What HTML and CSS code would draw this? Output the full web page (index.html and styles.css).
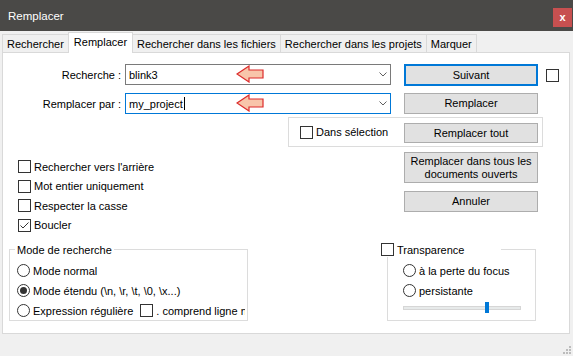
FILE: index.html
```html
<!DOCTYPE html>
<html lang="fr">
<head>
  <meta charset="UTF-8">
  <meta name="viewport" content="width=device-width, initial-scale=1.0">
  <title>Remplacer</title>
  <link rel="stylesheet" href="styles.css">
</head>
<body>
  <div class="window">
    <div class="titlebar">
      <span class="title">Remplacer</span>
      <span class="close">x</span>
    </div>

    <div class="tabs">
      <div class="tab">Rechercher</div>
      <div class="tab active">Remplacer</div>
      <div class="tab">Rechercher dans les fichiers</div>
      <div class="tab">Rechercher dans les projets</div>
      <div class="tab">Marquer</div>
    </div>

    <div class="panel">
      <!-- champs de recherche -->
      <div class="row">
        <div class="field">
          <span class="field-label">Recherche :</span>
          <div class="combo">
            <span class="combo-text">blink3</span>
            <svg class="pointer" width="28" height="18" viewBox="0 0 28 18"><polygon points="1,9 13,1 13,5 27,5 27,13 13,13 13,17" fill="#f8c5aa" stroke="#dc2b2b" stroke-width="1.2" stroke-linejoin="miter"/></svg>
            <svg class="chevron" width="8" height="5" viewBox="0 0 8 5"><polyline points="0.5,0.5 4,4 7.5,0.5" fill="none" stroke="#606060"/></svg>
          </div>
        </div>
        <div class="btn default">Suivant</div>
        <span class="box top-box"></span>
      </div>

      <div class="row">
        <div class="field">
          <span class="field-label">Remplacer par :</span>
          <div class="combo focus">
            <span class="combo-text">my_project</span><span class="caret"></span>
            <svg class="pointer" width="28" height="18" viewBox="0 0 28 18"><polygon points="1,9 13,1 13,5 27,5 27,13 13,13 13,17" fill="#f8c5aa" stroke="#dc2b2b" stroke-width="1.2" stroke-linejoin="miter"/></svg>
            <svg class="chevron" width="8" height="5" viewBox="0 0 8 5"><polyline points="0.5,0.5 4,4 7.5,0.5" fill="none" stroke="#606060"/></svg>
          </div>
        </div>
        <div class="btn">Remplacer</div>
      </div>

      <div class="selection">
        <label class="check"><span class="box"></span>Dans sélection</label>
        <div class="btn">Remplacer tout</div>
      </div>

      <!-- options -->
      <div class="options">
        <div class="checks">
          <label class="check"><span class="box"></span>Rechercher vers l'arrière</label>
          <label class="check"><span class="box"></span>Mot entier uniquement</label>
          <label class="check"><span class="box"></span>Respecter la casse</label>
          <label class="check"><span class="box"><svg width="11" height="11" viewBox="0 0 11 11"><polyline points="1.5,5.5 4,8 9.5,2.5" fill="none" stroke="#333"/></svg></span>Boucler</label>
        </div>
        <div class="actions">
          <div class="btn tall">Remplacer dans tous les<br>documents ouverts</div>
          <div class="btn">Annuler</div>
        </div>
      </div>

      <!-- modes -->
      <div class="modes">
        <fieldset class="mode">
          <legend>Mode de recherche</legend>
          <div class="radios">
            <label class="radio-row"><span class="radio"></span>Mode normal</label>
            <label class="radio-row"><span class="radio on"></span>Mode étendu (\n, \r, \t, \0, \x...)</label>
            <label class="radio-row"><span class="radio"></span>Expression régulière<span class="box dot-box"></span>. comprend ligne n</label>
          </div>
        </fieldset>

        <fieldset class="transp">
          <legend><span class="legend-check"><span class="box"></span>Transparence</span></legend>
          <div class="radios">
            <label class="radio-row"><span class="radio"></span>à la perte du focus</label>
            <label class="radio-row"><span class="radio"></span>persistante</label>
          </div>
          <div class="slider"><span class="thumb"></span></div>
        </fieldset>
      </div>
    </div>

    <div class="statusbar">
      <svg width="9" height="9" viewBox="0 0 9 9" fill="#bcbcbc">
        <rect x="7" y="1" width="2" height="2"/>
        <rect x="4" y="4" width="2" height="2"/>
        <rect x="7" y="4" width="2" height="2"/>
        <rect x="1" y="7" width="2" height="2"/>
        <rect x="4" y="7" width="2" height="2"/>
        <rect x="7" y="7" width="2" height="2"/>
      </svg>
    </div>
  </div>
</body>
</html>
```

FILE: styles.css
```css
* {
  box-sizing: border-box;
}

body {
  margin: 0;
  background: #f0f0f0;
  font-family: "Liberation Sans", Arial, sans-serif;
  font-size: 11px;
  color: #000;
  overflow: hidden;
}

.window {
  width: 573px;
  height: 356px;
  display: flex;
  flex-direction: column;
  background: #f0f0f0;
}

/* barre de titre */
.titlebar {
  flex: 0 0 31px;
  background: #4a4947;
  color: #fff;
  display: flex;
  align-items: flex-start;
  justify-content: space-between;
  padding: 0 1px 0 8px;
}

.title {
  margin-top: 9px;
  font-size: 11.5px;
  line-height: 14px;
}

.close {
  margin-top: 8px;
  width: 19px;
  height: 19px;
  background: #c75050;
  display: flex;
  align-items: center;
  justify-content: center;
  font-weight: bold;
  font-size: 11px;
  line-height: 1;
}

/* onglets */
.tabs {
  flex: 0 0 21px;
  display: flex;
  align-items: flex-end;
  padding-left: 2px;
  position: relative;
  z-index: 1;
}

.tab {
  height: 18px;
  padding: 0 4px;
  border: 1px solid #d9d9d9;
  border-bottom: none;
  margin-left: -1px;
  background: #f0f0f0;
  display: flex;
  align-items: center;
  white-space: nowrap;
}

.tab:first-child {
  margin-left: 0;
}

.tab.active {
  height: 21px;
  margin-bottom: -1px;
  padding: 0 5px 2px;
  background: #fff;
}

/* panneau principal */
.panel {
  flex: 0 0 282px;
  margin: 0 3px 0 2px;
  background: #fff;
  border: 1px solid #d9d9d9;
  padding-top: 11px;
}

.row {
  display: flex;
  align-items: flex-start;
}

.row + .row {
  margin-top: 7px;
}

.field {
  flex: 0 0 401px;
  display: flex;
  align-items: center;
}

.field-label {
  flex: 0 0 118px;
  margin-right: 4px;
  text-align: right;
}

.combo {
  width: 266px;
  height: 21px;
  border: 1px solid #7a7a7a;
  background: #fff;
  position: relative;
  display: flex;
  align-items: center;
  padding: 0 3px 0 3px;
}

.combo.focus {
  border-color: #0078d7;
}

.caret {
  width: 1px;
  height: 13px;
  margin-left: 1px;
  background: #000;
}

.chevron {
  margin-left: auto;
}

.pointer {
  position: absolute;
  left: 110px;
  top: 0;
}

.btn {
  width: 134px;
  height: 21px;
  flex: 0 0 auto;
  background: #e1e1e1;
  border: 1px solid #adadad;
  display: flex;
  align-items: center;
  justify-content: center;
  text-align: center;
  line-height: 13px;
}

.btn.default {
  height: 22px;
  border: 2px solid #0078d7;
}

.btn.tall {
  height: 31px;
}

.box {
  width: 13px;
  height: 13px;
  flex: 0 0 13px;
  border: 1px solid #333;
  background: #fff;
  display: inline-flex;
}

.top-box {
  margin: 5px 0 0 8px;
}

.check {
  display: flex;
  align-items: center;
  gap: 3px;
  white-space: nowrap;
}

.selection {
  margin: 3px 0 0 285px;
  width: 255px;
  height: 30px;
  border: 1px solid #dcdcdc;
  display: flex;
  align-items: center;
  padding: 0 4px 0 11px;
}

.selection .btn {
  margin-left: auto;
  height: 20px;
  margin-top: 2px;
}

.options {
  display: grid;
  grid-template-columns: 401px 134px;
  margin-top: 5px;
}

.checks {
  display: flex;
  flex-direction: column;
  gap: 6.5px;
  padding: 8px 0 0 15px;
}

.checks .check {
  height: 13px;
}

.actions {
  display: flex;
  flex-direction: column;
  gap: 8px;
}

/* groupes du bas */
.modes {
  display: flex;
  align-items: flex-start;
  margin-top: 11px;
}

fieldset {
  margin: 0;
  min-width: 0;
  border: 1px solid #dcdcdc;
}

legend {
  padding: 0 2px;
  line-height: 14px;
}

.mode {
  margin-left: 6px;
  width: 239px;
  padding: 5px 2px 0 7px;
}

.mode legend {
  margin-left: -2px;
}

.radios {
  display: flex;
  flex-direction: column;
  gap: 2px;
}

.radio-row {
  height: 18px;
  display: flex;
  align-items: center;
  gap: 3px;
  white-space: nowrap;
  overflow: hidden;
}

.radio {
  width: 13px;
  height: 13px;
  flex: 0 0 13px;
  border: 1px solid #333;
  border-radius: 50%;
  background: #fff;
  display: flex;
  align-items: center;
  justify-content: center;
}

.radio.on::after {
  content: "";
  width: 7px;
  height: 7px;
  border-radius: 50%;
  background: #333;
}

.dot-box {
  margin-left: 4px;
}

.transp {
  margin-left: 139px;
  width: 149px;
  padding: 5px 0 10px 15px;
}

.transp legend {
  margin-left: -22px;
  width: 120px;
  padding: 0;
}

.legend-check {
  display: flex;
  align-items: center;
  gap: 3px;
}

.slider {
  position: relative;
  width: 118px;
  height: 4px;
  margin-top: 6px;
  background: #e7eaea;
  border: 1px solid #d6d6d6;
}

.thumb {
  position: absolute;
  left: 81px;
  top: -5px;
  width: 4px;
  height: 11px;
  background: #0078d7;
}

.statusbar {
  flex: 1;
  display: flex;
  justify-content: flex-end;
  align-items: flex-end;
  padding: 0 2px 2px 0;
}
```
